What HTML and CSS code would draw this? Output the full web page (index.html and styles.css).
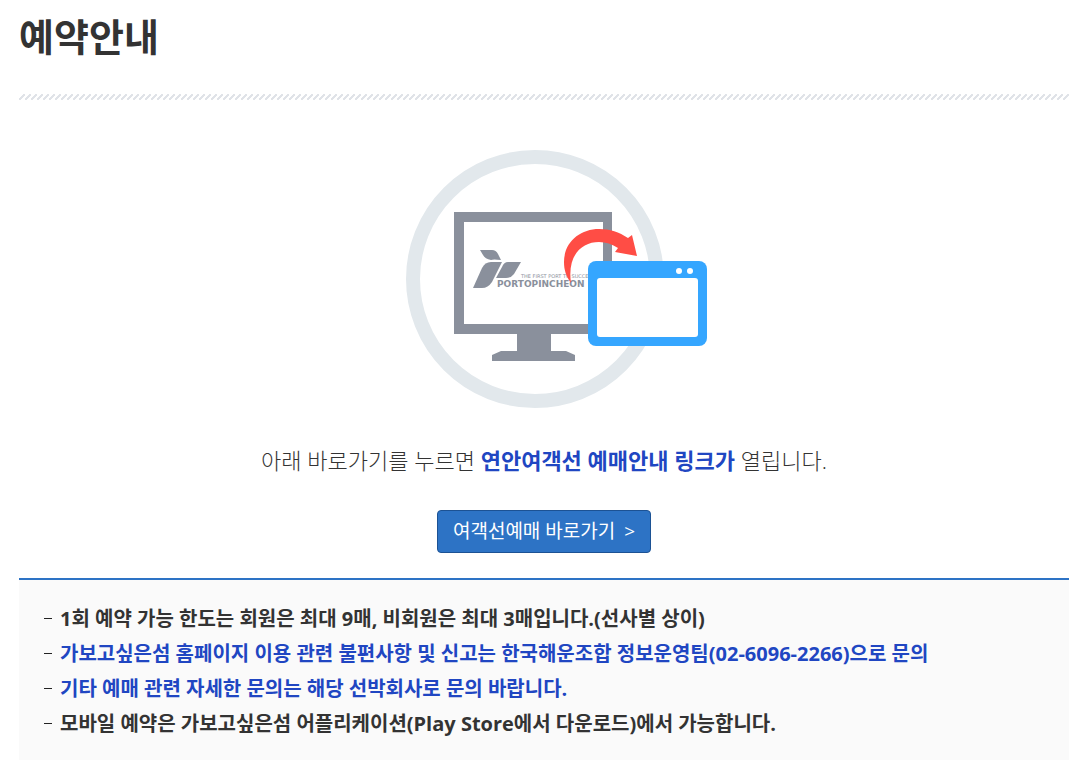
FILE: index.html
```html
<!DOCTYPE html>
<html lang="ko">

<head>
    <meta charset="UTF-8">
    <meta name="viewport" content="width=device-width, initial-scale=1.0">
    <title>예약안내</title>
    <link rel="stylesheet" href="styles.css">
</head>

<body>
    <header class="page-title">
        <h1>예약안내</h1>
    </header>

    <main>
        <section class="guide">
            <svg class="guide-img" width="325" height="258" viewBox="-24 0 325 258" aria-hidden="true">
                <circle cx="129" cy="129" r="122" fill="none" stroke="#e2e8ec" stroke-width="14"/>
                <!-- 모니터 -->
                <path fill="#8a909c" fill-rule="evenodd" d="M48 62h158v122h-61v17h15l9 4v6H86v-6l9-4h16v-17H48zM58 72v102h139V72z"/>
                <!-- 로고 -->
                <g fill="#8a909c">
                    <path d="M74 100h12q4 0 6 4l3 6q-8-1-10 0-6-1-8-5z"/>
                    <path d="M85 112h11L86 132q-4 6-10 6h-9l9-20q3-6 9-6z"/>
                    <path d="M102 112h13l-7 12q-3 4-8 4H90l6-11q2-5 6-5z"/>
                    <text class="logo-sub" x="115" y="128">THE FIRST PORT TO SUCCESS</text>
                    <text class="logo-name" x="91" y="137">PORTOPINCHEON</text>
                </g>
                <!-- 화살표 -->
                <path fill="#ff4d45" d="M165 133C160 126 158 120 158 112C158 92 174 79 193 79C204 79 213 82 222 88L226 85L231 106L209 102L212 98C206 94 200 92 193 92C176 92 161 105 165 133z"/>
                <!-- 새창 -->
                <rect x="182" y="111" width="119" height="85" rx="8" fill="#35a6ff"/>
                <rect x="191" y="128" width="101" height="59" rx="3" fill="#fff"/>
                <circle cx="273" cy="121" r="3" fill="#fff"/>
                <circle cx="284" cy="121" r="3" fill="#fff"/>
            </svg>
            <p class="guide-text">아래 바로가기를 누르면 <strong>연안여객선 예매안내 링크가</strong> 열립니다.</p>
            <a class="btn" href="#">여객선예매 바로가기 <span class="arrow">&gt;</span></a>
        </section>

        <ul class="notice">
            <li>1회 예약 가능 한도는 회원은 최대 9매, 비회원은 최대 3매입니다.(선사별 상이)</li>
            <li class="point">가보고싶은섬 홈페이지 이용 관련 불편사항 및 신고는 한국해운조합 정보운영팀(02-6096-2266)으로 문의</li>
            <li class="point">기타 예매 관련 자세한 문의는 해당 선박회사로 문의 바랍니다.</li>
            <li>모바일 예약은 가보고싶은섬 어플리케이션(Play Store에서 다운로드)에서 가능합니다.</li>
        </ul>
    </main>
</body>

</html>
```
FILE: styles.css
```css
* {
    box-sizing: border-box;
}

body {
    margin: 0 7px 0 19px;
    background-color: #fff;
    color: #333;
    font-family: "Open Sans", "Noto Sans CJK KR", sans-serif;
    font-size: 20px;
}

h1, p, ul {
    margin: 0;
    padding: 0;
}

/* 제목 + 사선 무늬 */
.page-title {
    height: 100px;
    padding-top: 11px;
    background: linear-gradient(135deg, transparent 38%, #e0e3e8 38%, #e0e3e8 62%, transparent 62%) left bottom / 6px 6px repeat-x;
}

h1 {
    font-size: 38px;
    line-height: 50px;
    font-weight: 700;
}

.guide {
    display: flex;
    flex-direction: column;
    align-items: center;
    padding: 50px 0 25px;
}

.guide-img {
    display: block;
}

.logo-name {
    font: bold 9px "DejaVu Sans", sans-serif;
}

.logo-sub {
    font: 5px "DejaVu Sans", sans-serif;
}

.guide-text {
    margin: 35px 0 33px;
    font-size: 22px;
    font-weight: 300;
    line-height: 34px;
}

.guide-text strong {
    color: #2046c2;
    font-weight: 700;
}

.btn {
    padding: 0 15px;
    border: 1px solid #1c5294;
    border-radius: 4px;
    background-color: #2d73c5;
    color: #fff;
    font-size: 19px;
    line-height: 41px;
    text-decoration: none;
}

.arrow {
    margin-left: 4px;
}

/* 유의사항 */
.notice {
    padding: 21px 24px 19px;
    border-top: 2px solid #2d73c5;
    background-color: #fafafa;
    list-style: none;
    font-weight: 700;
    line-height: 35px;
}

.notice li {
    display: flex;
}

.notice li::before {
    content: "";
    flex: none;
    width: 8px;
    height: 1px;
    margin: 17px 8px 0 1px;
    background-color: #222;
}

.notice .point {
    color: #2046c2;
}
```
